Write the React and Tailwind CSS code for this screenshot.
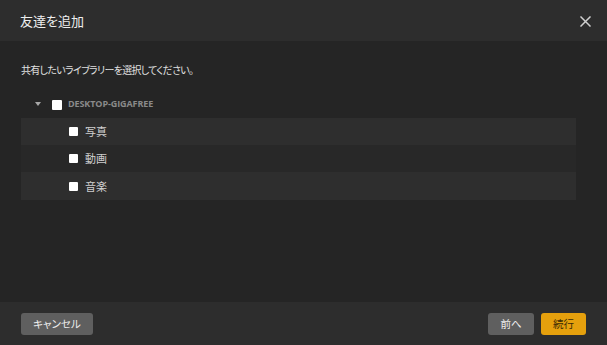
import React from "react";

const jp = "font-['Noto_Sans_CJK_JP','Noto_Sans',sans-serif] [font-feature-settings:'palt']";

function Check({ size = "w-[9px] h-[9px]" }) {
  return <span className={`${size} bg-white rounded-[1px] inline-block shrink-0`} />;
}

function Row({ label, bg, h = "h-[27px]" }) {
  return (
    <div className={`${h} ${bg} flex items-center pl-[48px]`}>
      <Check size="w-[9px] h-[9px]" />
      <span className={`ml-[7px] text-[11px] text-[#cfcfcf] ${jp}`}>{label}</span>
    </div>
  );
}

export default function App() {
  return (
    <div className="w-[607px] h-[345px] flex flex-col bg-[#252525] overflow-hidden">
      <div className="h-[41px] bg-[#2d2d2d] flex items-center justify-between pl-[20px] pr-[16px] shrink-0">
        <span className={`text-[13px] text-[#eeeeee] ${jp}`}>友達を追加</span>
        <svg width="11" height="11" viewBox="0 0 11 11" className="mt-[1px]">
          <path d="M1 1L10 10M10 1L1 10" stroke="#d0d0d0" strokeWidth="1.5" strokeLinecap="square" />
        </svg>
      </div>
      <div className="flex-1 pl-[21px] pr-[31px] pt-[22px]">
        <div className={`h-[14px] leading-[14px] text-[10px] tracking-[-0.7px] text-[#e0e0e0] ${jp}`}>
          共有したいライブラリーを選択してください。
        </div>
        <div className="mt-[12px] h-[29px] flex items-center pl-[14px]">
          <svg width="6" height="4" viewBox="0 0 6 4" className="mt-[1px]">
            <path d="M0 0H6L3 4Z" fill="#a8a8a8" />
          </svg>
          <span className="ml-[11px]"><Check size="w-[10px] h-[10px]" /></span>
          <span className="ml-[6px] text-[9px] font-bold text-[#8a8a8a] font-['Open_Sans','Liberation_Sans',sans-serif] tracking-[-0.1px]">
            DESKTOP-GIGAFREE
          </span>
        </div>
        <div className="flex flex-col">
          <Row label="写真" bg="bg-[#2e2e2e]" />
          <Row label="動画" bg="bg-[#282828]" />
          <Row label="音楽" bg="bg-[#2e2e2e]" h="h-[28px]" />
        </div>
      </div>
      <div className="h-[43px] bg-[#2d2d2d] flex items-center justify-between px-[21px] shrink-0">
        <button className={`w-[72px] h-[22px] rounded-[3px] bg-[#5f5f5f] text-[10.5px] text-[#eeeeee] ${jp}`}>
          キャンセル
        </button>
        <div className="flex gap-[7px]">
          <button className={`w-[46px] h-[22px] rounded-[3px] bg-[#5f5f5f] text-[10.5px] text-[#eeeeee] ${jp}`}>
            前へ
          </button>
          <button className={`w-[45px] h-[22px] rounded-[3px] bg-[#e5a00d] text-[10.5px] text-[#3a2a05] ${jp}`}>
            続行
          </button>
        </div>
      </div>
    </div>
  );
}
